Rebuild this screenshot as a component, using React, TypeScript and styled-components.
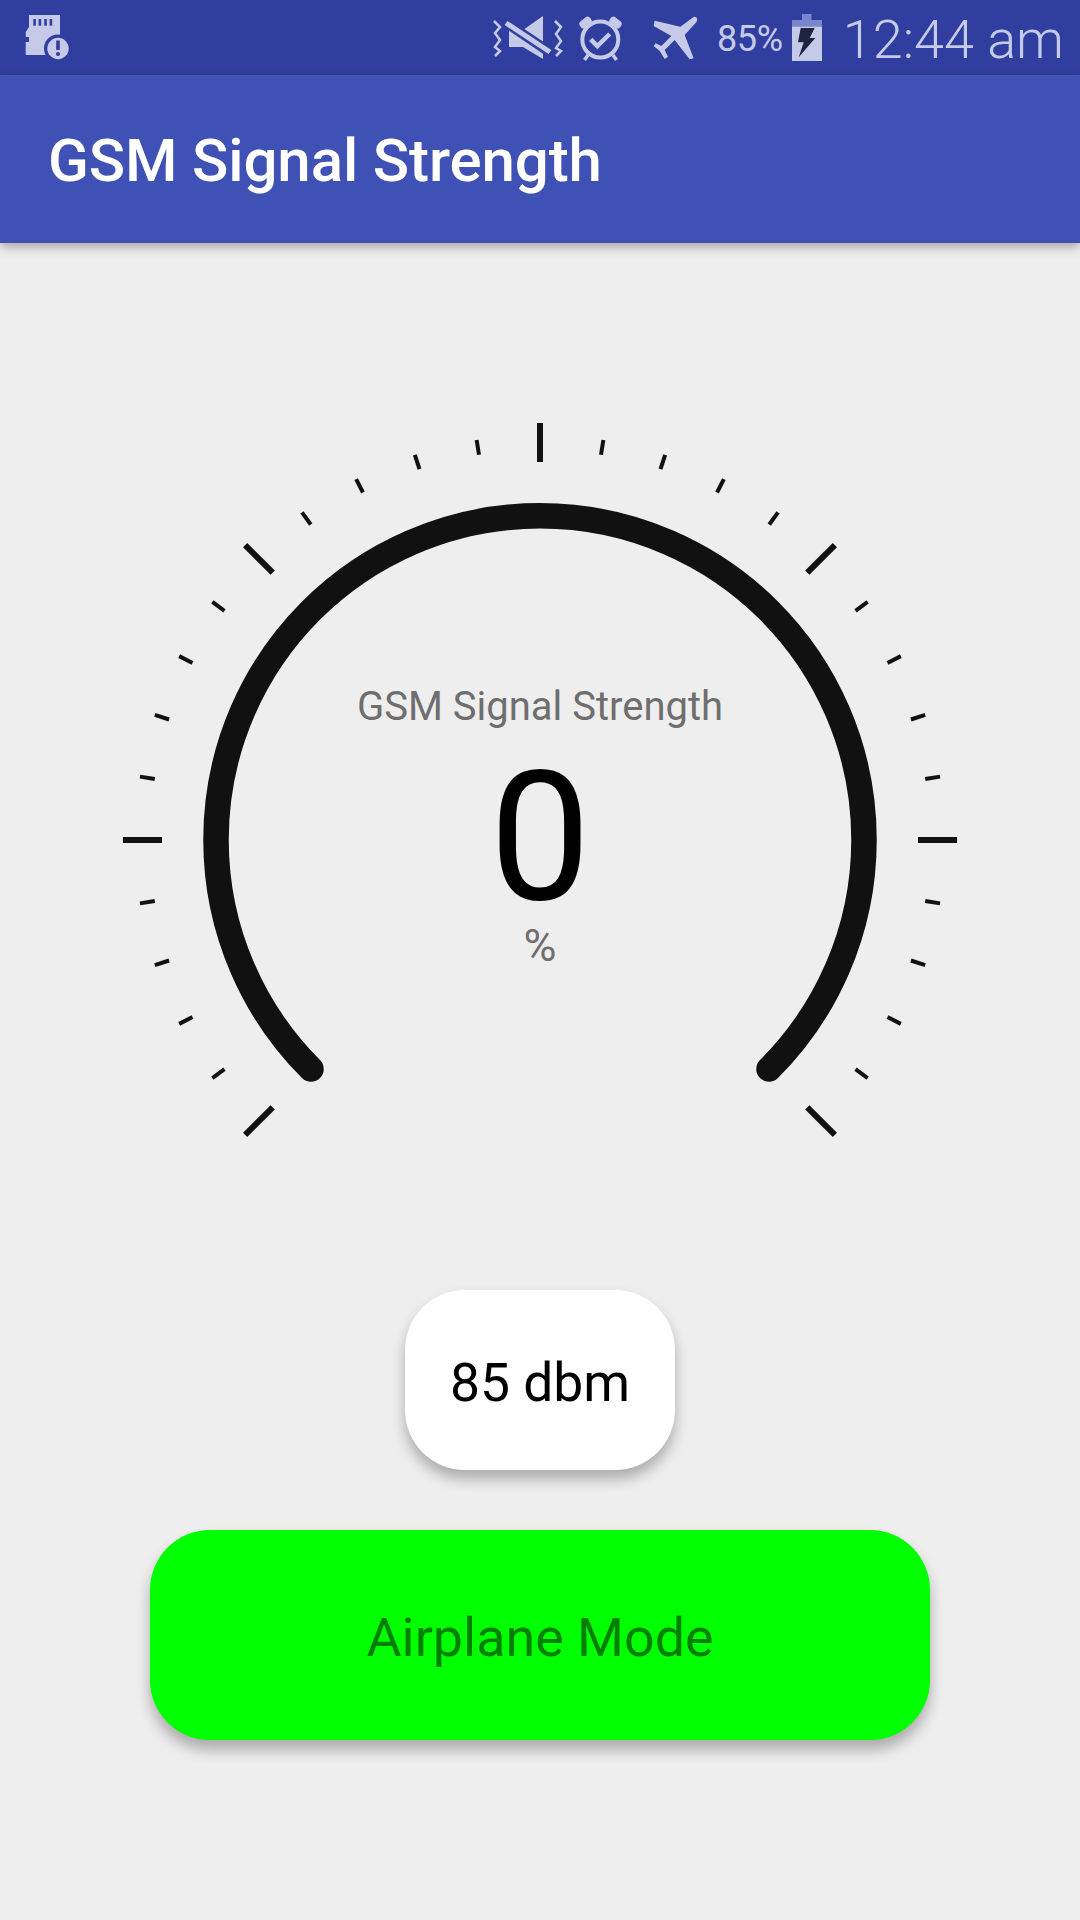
import React from "react";
import styled, {createGlobalStyle} from "styled-components";

const GlobalStyle = createGlobalStyle`
    html, body {
        margin: 0;
        padding: 0;
        background: #eeeeee;
        font-family: Roboto, "Liberation Sans", sans-serif;
    }
`

const Page = styled.div`
    width: 1080px;
    height: 1920px;
    overflow: hidden;
    background: #eeeeee;
    display: flex;
    flex-direction: column;
`

const StatusBar = styled.div`
    height: 75px;
    flex: none;
    background: #303f9f;
    color: #c5cae9;
    display: flex;
    align-items: center;
    justify-content: space-between;
    padding: 0 16px 0 25px;
    box-sizing: border-box;
`

const StatusGroup = styled.div`
    display: flex;
    align-items: center;
`

const StatusIcon = styled.svg<{$gap?: number}>`
    display: block;
    fill: #c5cae9;
    margin-left: ${p => p.$gap ?? 0}px;
`

const BatteryText = styled.span`
    font-size: 36px;
    line-height: 44px;
    margin: 2px 0 0 19px;
    letter-spacing: -0.3px;
`

const Clock = styled.span`
    font-size: 54px;
    line-height: 60px;
    font-weight: 300;
    margin: 4px 0 0 21px;
`

const AppBar = styled.header`
    height: 168px;
    flex: none;
    background: #3f51b5;
    color: #ffffff;
    display: flex;
    align-items: center;
    padding: 3px 0 0 48px;
    box-sizing: border-box;
    box-shadow: 0 4px 10px rgba(0, 0, 0, 0.3);
    position: relative;
    font-size: 60px;
    font-weight: 500;
    letter-spacing: -0.12px;
`

const Main = styled.main`
    display: flex;
    flex-direction: column;
    align-items: center;
    padding-top: 157px;
`

const Gauge = styled.div`
    position: relative;
    width: 840px;
    height: 760px;
`

const GaugeSvg = styled.svg`
    display: block;
`

const Tick = styled.line<{$major: boolean}>`
    stroke: #111111;
    stroke-width: ${p => p.$major ? 6 : 4}px;
`

const Arc = styled.path`
    fill: none;
    stroke: #111111;
    stroke-width: 25.5px;
    stroke-linecap: round;
`

const Readout = styled.div`
    position: absolute;
    top: 284px;
    left: 0;
    right: 0;
    display: flex;
    flex-direction: column;
    align-items: center;
`

const Caption = styled.div`
    font-size: 40px;
    line-height: 46px;
    color: #6e6e6e;
`

const Value = styled.div`
    font-size: 180px;
    line-height: 150px;
    color: #000000;
    margin-top: 33px;
`

const Unit = styled.div`
    font-size: 45px;
    line-height: 46px;
    color: #6e6e6e;
    margin-top: 10px;
`

const Pill = styled.div`
    width: 270px;
    height: 180px;
    margin-top: 130px;
    padding-top: 4px;
    box-sizing: border-box;
    border-radius: 60px;
    background: #ffffff;
    box-shadow: 0 9px 14px rgba(0, 0, 0, 0.28);
    display: flex;
    align-items: center;
    justify-content: center;
    font-size: 53.4px;
    color: #000000;
`

const ModeButton = styled.button`
    width: 780px;
    height: 210px;
    margin-top: 60px;
    border: none;
    padding: 4px 0 0;
    border-radius: 60px;
    background: #00ff00;
    box-shadow: 0 10px 14px rgba(0, 0, 0, 0.28);
    font-family: inherit;
    font-size: 53.8px;
    color: #007f00;
`

const SdAlertIcon = () => (
    <StatusIcon width="45" height="45" viewBox="0 0 45 45">
        <path d="M4 0H35V40H.7V27H4V22H.7V17L4 12Z"/>
        <rect x="8.3" y="4" width="2.6" height="6.7" fill="#303f9f"/>
        <rect x="13.6" y="4" width="2.6" height="6.7" fill="#303f9f"/>
        <rect x="19.2" y="4" width="2.6" height="6.7" fill="#303f9f"/>
        <rect x="24.6" y="4" width="2.6" height="6.7" fill="#303f9f"/>
        <circle cx="33" cy="33.5" r="14" fill="#303f9f"/>
        <circle cx="33" cy="33.5" r="10.7"/>
        <rect x="31.2" y="25.5" width="3.6" height="9.5" fill="#303f9f"/>
        <circle cx="33" cy="39" r="2.1" fill="#303f9f"/>
    </StatusIcon>
)

const VibrateOffIcon = () => (
    <StatusIcon width="70" height="46" viewBox="0 0 70 46">
        <path d="M16 15H30L50 1V44L30 32H16Z"/>
        <line x1="12" y1="7" x2="58" y2="38" stroke="#303f9f" strokeWidth="10"/>
        <line x1="13" y1="8" x2="57" y2="37" stroke="#c5cae9" strokeWidth="5"/>
        <polyline points="1,6 7,12 2,18 7,25 2,32 7,36 2,41" fill="none" stroke="#c5cae9" strokeWidth="2.5"/>
        <polyline points="62,6 68,12 63,19 68,26 63,33 68,36 63,41" fill="none" stroke="#c5cae9" strokeWidth="2.5"/>
    </StatusIcon>
)

const AlarmIcon = () => (
    <StatusIcon $gap={15} width="45" height="46" viewBox="0 0 45 46">
        <rect x="1" y="3.5" width="13" height="8" rx="3.5" transform="rotate(-38 7.5 7.5)"/>
        <rect x="31" y="3.5" width="13" height="8" rx="3.5" transform="rotate(38 37.5 7.5)"/>
        <circle cx="22.3" cy="24.5" r="18" fill="none" stroke="#c5cae9" strokeWidth="4"/>
        <polyline points="12.7,24.3 19.3,31 31.7,19" fill="none" stroke="#c5cae9" strokeWidth="4.5"/>
        <line x1="10" y1="40" x2="6.5" y2="45" stroke="#c5cae9" strokeWidth="3.5"/>
        <line x1="35" y1="40" x2="38.5" y2="45" stroke="#c5cae9" strokeWidth="3.5"/>
    </StatusIcon>
)

const PlaneIcon = () => (
    <StatusIcon $gap={30} width="45" height="44" viewBox="40 28 135 132">
        <path d="M163 30Q176 31 171 45L135 85L162 155L150 158L105 100L75 130L85 150L75 157L60 133L42 118L48 110L65 118L95 88L42 58L45 42L122 60Z"/>
    </StatusIcon>
)

const BatteryIcon = () => (
    <StatusIcon $gap={9} width="30" height="47" viewBox="0 0 30 47">
        <path d="M10 0H19.5V6H30V12.5H0V6H10Z" fill="#7986cb"/>
        <rect x="0" y="12.5" width="30" height="34.5"/>
        <path d="M8.7 14H22.7L17.7 24H23.3L6.7 43.3L11.7 28.3H6Z" fill="#1f2440"/>
    </StatusIcon>
)

const TICK_COUNT = 30
const CX = 420
const CY = 440

const ticks = Array.from({length: TICK_COUNT + 1}, (_, i) => {
    const major = i % 5 === 0
    const rad = (225 - i * 9) * Math.PI / 180
    const inner = major ? 378 : 390
    const outer = major ? 417 : 405
    return {
        major,
        x1: CX + inner * Math.cos(rad),
        y1: CY - inner * Math.sin(rad),
        x2: CX + outer * Math.cos(rad),
        y2: CY - outer * Math.sin(rad),
    }
})

export default function App() {
    return (
        <Page>
            <GlobalStyle/>
            <StatusBar>
                <SdAlertIcon/>
                <StatusGroup>
                    <VibrateOffIcon/>
                    <AlarmIcon/>
                    <PlaneIcon/>
                    <BatteryText>85%</BatteryText>
                    <BatteryIcon/>
                    <Clock>12:44 am</Clock>
                </StatusGroup>
            </StatusBar>
            <AppBar>GSM Signal Strength</AppBar>
            <Main>
                <Gauge>
                    <GaugeSvg width="840" height="760" viewBox="0 0 840 760">
                        <Arc d="M191 669A324 324 0 1 1 649 669"/>
                        {ticks.map((t, i) => (
                            <Tick key={i} $major={t.major} x1={t.x1} y1={t.y1} x2={t.x2} y2={t.y2}/>
                        ))}
                    </GaugeSvg>
                    <Readout>
                        <Caption>GSM Signal Strength</Caption>
                        <Value>0</Value>
                        <Unit>%</Unit>
                    </Readout>
                </Gauge>
                <Pill>85 dbm</Pill>
                <ModeButton>Airplane Mode</ModeButton>
            </Main>
        </Page>
    )
}
